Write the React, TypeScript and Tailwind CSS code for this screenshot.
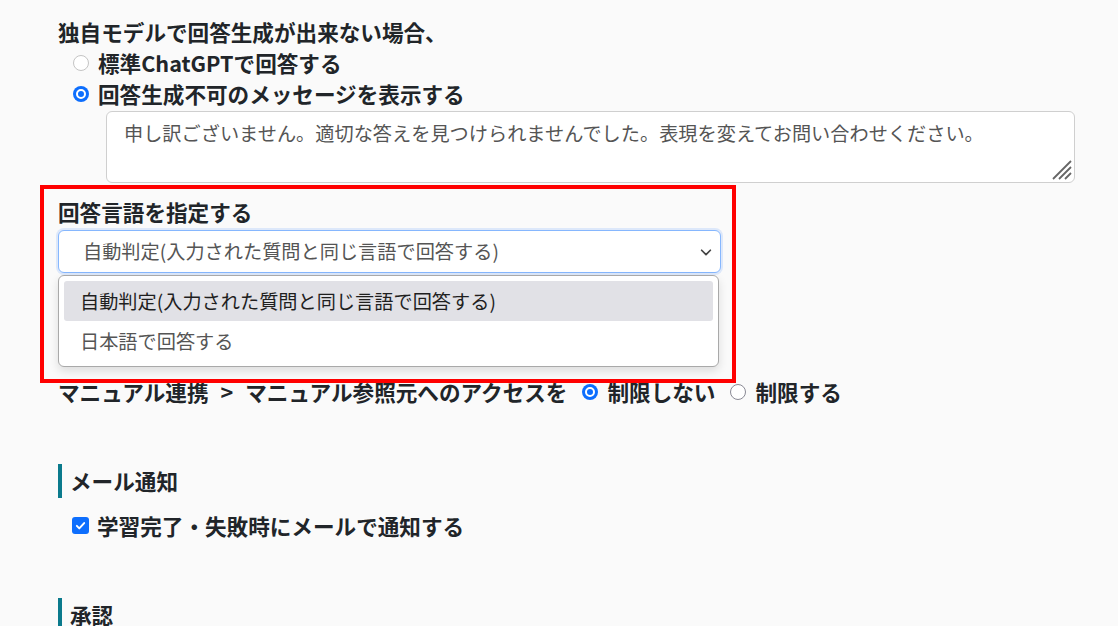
import React from 'react';

const Radio = ({ checked, dark }: { checked?: boolean; dark?: boolean }) =>
  checked ? (
    <span className="inline-flex h-[16px] w-[16px] shrink-0 items-center justify-center rounded-full bg-[#0d6efd]">
      <span className="h-[10px] w-[10px] rounded-full border-[2px] border-white bg-[#0d6efd]" />
    </span>
  ) : (
    <span
      className={`inline-block h-[16px] w-[16px] shrink-0 rounded-full border-[1.5px] bg-white ${
        dark ? 'border-[#8a8a95]' : 'border-[#c4c4c4]'
      }`}
    />
  );

const Checkbox = () => (
  <span className="inline-flex h-[17px] w-[17px] shrink-0 items-center justify-center rounded-[3px] bg-[#0d6efd]">
    <svg viewBox="0 0 16 16" className="h-[13px] w-[13px]" fill="none" stroke="white" strokeWidth="2.4" strokeLinecap="round" strokeLinejoin="round">
      <path d="M3.5 8.5l3 3 6-6.5" />
    </svg>
  </span>
);

const SectionTitle = ({ children }: { children: React.ReactNode }) => (
  <div className="flex h-[34px] items-center border-l-[4px] border-[#0a7a8c] pl-[8px] text-[21.6px] font-bold leading-[34px]">
    {children}
  </div>
);

export default function App() {
  return (
    <div className="relative min-h-screen overflow-hidden bg-[#fafafa] pl-[58px] pr-[43px] pt-[16px] text-[#212529] font-['Noto_Sans_CJK_JP','Noto_Sans',sans-serif]">
      {/* fallback model */}
      <div className="text-[21.6px] font-bold leading-[31px]">独自モデルで回答生成が出来ない場合、</div>
      <div className="ml-[15px] flex items-center gap-[9px] text-[21.6px] font-bold leading-[31px]">
        <Radio />
        <span>標準ChatGPTで回答する</span>
      </div>
      <div className="ml-[15px] flex items-center gap-[9px] text-[21.6px] font-bold leading-[31px]">
        <Radio checked />
        <span>回答生成不可のメッセージを表示する</span>
      </div>
      <div className="relative ml-[48px] mt-[2px] h-[72px] rounded-[6px] border border-[#cfcfcf] bg-white px-[17px] py-[7px] text-[19.2px] leading-[29px] text-[#555]">
        申し訳ございません。適切な答えを見つけられませんでした。表現を変えてお問い合わせください。
        <svg viewBox="0 0 24 24" className="absolute bottom-[1px] right-[1px] h-[24px] w-[24px]" stroke="#666" strokeWidth="1.8">
          <path d="M22 4L4 22M22 10L10 22M22 16L16 22" />
        </svg>
      </div>

      {/* answer language */}
      <div className="mt-[13px] text-[21.6px] font-bold leading-[31px]">回答言語を指定する</div>
      <div className="relative mt-[3px] w-[663px]">
        <div className="flex h-[43px] items-center justify-between rounded-[6px] border border-[#86b7fe] bg-white pl-[24px] pr-[7px] text-[19.2px] text-[#555] shadow-[0_0_0_2px_rgba(13,110,253,0.12)]">
          <span>自動判定(入力された質問と同じ言語で回答する)</span>
          <svg viewBox="0 0 16 16" className="h-[14px] w-[14px]" fill="none" stroke="#444" strokeWidth="2" strokeLinecap="round" strokeLinejoin="round">
            <path d="M3 6l5 5 5-5" />
          </svg>
        </div>
        <div className="absolute left-0 top-[45px] z-10 w-[661px] rounded-[6px] border border-[#a9a9a9] bg-white px-[5px] py-[5px] text-[19.2px] shadow-[0_4px_10px_rgba(0,0,0,0.12)]">
          <div className="flex h-[40px] items-center rounded-[3px] bg-[#e1e1e6] pl-[16px] text-[#1f1f1f]">
            自動判定(入力された質問と同じ言語で回答する)
          </div>
          <div className="flex h-[40px] items-center pl-[16px] text-[#555]">日本語で回答する</div>
        </div>
      </div>

      {/* manual access */}
      <div className="mt-[103px] flex items-center text-[21.6px] font-bold leading-[31px]">
        <span>マニュアル連携</span>
        <span className="mx-[12px]">&gt;</span>
        <span>マニュアル参照元へのアクセスを</span>
        <span className="ml-[15px] flex items-center gap-[9px]">
          <Radio checked />
          <span>制限しない</span>
        </span>
        <span className="ml-[15px] flex items-center gap-[9px]">
          <Radio dark />
          <span>制限する</span>
        </span>
      </div>

      {/* mail */}
      <div className="mt-[57px]">
        <SectionTitle>メール通知</SectionTitle>
      </div>
      <div className="ml-[14px] mt-[12px] flex items-center gap-[8px] text-[21.6px] font-bold leading-[31px]">
        <Checkbox />
        <span>学習完了・失敗時にメールで通知する</span>
      </div>

      {/* approval */}
      <div className="mt-[57px]">
        <SectionTitle>承認</SectionTitle>
      </div>

      {/* annotation */}
      <div className="pointer-events-none absolute left-[40px] top-[185px] z-20 h-[198px] w-[696px] border-[4px] border-[#ff0000]" />
    </div>
  );
}
